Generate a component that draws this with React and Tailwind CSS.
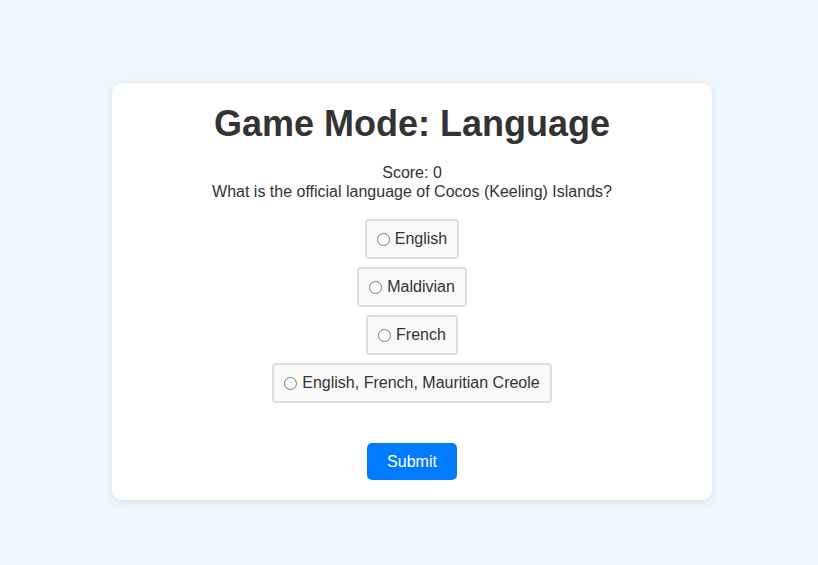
import React, { useState } from 'react'

const options = ['English', 'Maldivian', 'French', 'English, French, Mauritian Creole']

const App = () => {
  const [picked, setPicked] = useState(null)

  return (
    <div className="min-h-screen bg-[#f0f8ff] pt-[83px] pl-[6px] text-[#333] font-['Liberation_Sans',Arial,sans-serif]">
      <div className="mx-auto w-[600px] rounded-[10px] bg-white p-5 text-center shadow-[0_2px_10px_rgba(0,0,0,0.1)]">
        <h1 className="mb-5 text-[36px] font-bold leading-[1.15]">Game Mode: Language</h1>

        <p className="text-base leading-[1.15]">Score: 0</p>
        <p className="text-base leading-[1.15]">What is the official language of Cocos (Keeling) Islands?</p>

        <div className="mt-[18px] flex flex-col items-center gap-2">
          {options.map((opt) => (
            <label
              key={opt}
              className="flex cursor-pointer items-center rounded border-2 border-[#ddd] bg-[#f9f9f9] px-[10px] py-[9px] text-base leading-[18px]"
            >
              <input
                type="radio"
                name="answer"
                checked={picked === opt}
                onChange={() => setPicked(opt)}
                className="mr-[5px] h-[13px] w-[13px]"
              />
              {opt}
            </label>
          ))}
        </div>

        <button className="mt-10 rounded-[5px] bg-[#007bff] px-5 py-[9.5px] text-base leading-[18px] text-white">
          Submit
        </button>
      </div>
    </div>
  )
}

export default App
